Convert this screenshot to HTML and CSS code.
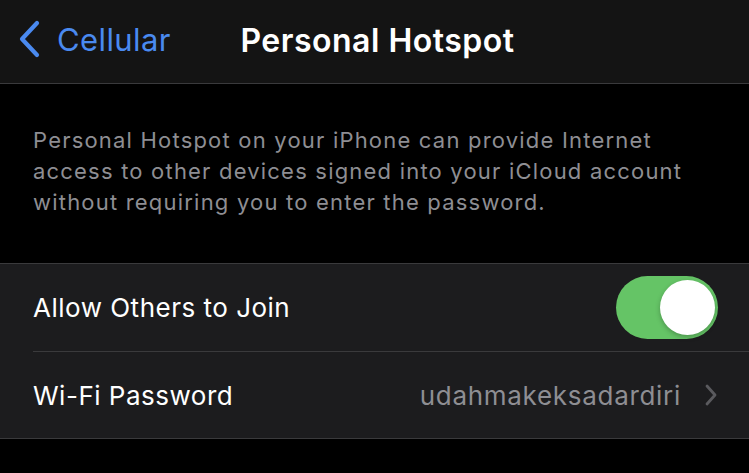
FILE: index.html
```html
<!DOCTYPE html>
<html lang="en">
  <head>
    <meta charset="UTF-8" />
    <title>Personal Hotspot</title>
    <link rel="stylesheet" href="styles.css">
  </head>
  <body>
    <header class="navbar">
      <a class="back" href="#">
        <svg class="back-icon" width="24" height="38" viewBox="0 0 24 38">
          <path d="M20 3 L5 19 L20 35" fill="none" stroke="currentColor" stroke-width="4.2" stroke-linecap="round" stroke-linejoin="round"/>
        </svg>
        <span>Cellular</span>
      </a>
      <h1 class="title">Personal Hotspot</h1>
    </header>
    <main>
      <p class="note">Personal Hotspot on your iPhone can provide Internet access to other devices signed into your iCloud account without requiring you to enter the password.</p>
      <ul class="group">
        <li class="row">
          <span class="label">Allow Others to Join</span>
          <span class="toggle on"><span class="knob"></span></span>
        </li>
        <li class="row">
          <span class="label">Wi-Fi Password</span>
          <span class="value">udahmakeksadardiri</span>
          <svg class="chevron" width="14" height="22" viewBox="0 0 14 22">
            <path d="M3 2 L11 11 L3 20" fill="none" stroke="currentColor" stroke-width="2.8" stroke-linecap="round" stroke-linejoin="round"/>
          </svg>
        </li>
      </ul>
    </main>
  </body>
</html>
```

FILE: styles.css
```css
* { box-sizing: border-box; }
html, body { margin: 0; height: 100%; }
body { background: #000; color: #fff; font-family: Inter, "Noto Sans", sans-serif; overflow: hidden; }
.navbar { position: relative; display: flex; align-items: center; justify-content: center; height: 84px; background: #141414; border-bottom: 1px solid #3a3a3c; }
.back { position: absolute; left: 17px; top: 20px; display: flex; align-items: center; gap: 16px; color: #4a8af0; text-decoration: none; font-size: 31px; letter-spacing: 0.4px; }
.back-icon { display: block; }
.title { margin: 0 0 2px 6px; font-size: 32px; font-weight: 600; letter-spacing: 0.5px; }
main { padding-top: 41px; }
.note { margin: 0 0 45px; padding: 0 33px; color: #8e8e93; font-size: 22px; line-height: 31px; letter-spacing: 1.2px; }
.group { margin: 0; padding: 0 0 0 33px; list-style: none; background: #1c1c1e; border-top: 1px solid #3a3a3c; border-bottom: 1px solid #3a3a3c; }
.row { display: flex; align-items: center; height: 87px; padding-right: 31px; font-size: 26px; letter-spacing: 0.5px; }
.row + .row { border-top: 1px solid #3a3a3c; }
.label { flex: 1; }
.value { color: #8e8e93; margin-right: 23px; letter-spacing: 0.7px; }
.chevron { color: #5a5a5e; }
.toggle { position: relative; width: 102px; height: 63px; border-radius: 32px; background: #34c759; }
.toggle.on { background: #65c466; }
.knob { position: absolute; right: 3px; top: 4px; width: 55px; height: 55px; border-radius: 50%; background: #fff; box-shadow: 0 2px 5px rgba(0, 0, 0, 0.25); }
```
